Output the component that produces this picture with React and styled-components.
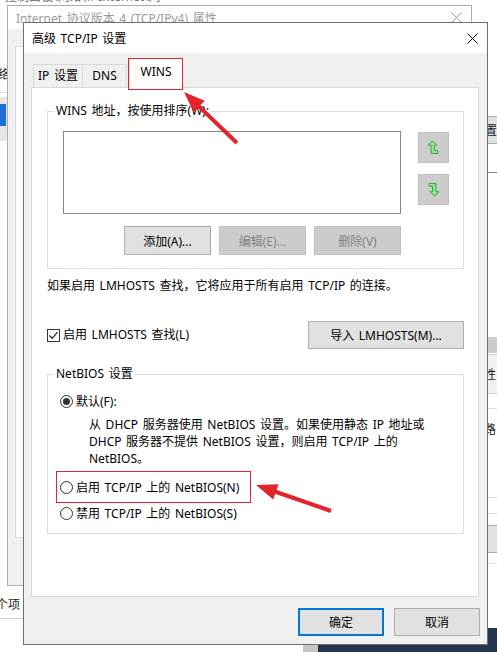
import styled, { createGlobalStyle } from 'styled-components';

const GlobalStyle = createGlobalStyle`
  html, body {
    margin: 0;
    padding: 0;
    background: #fff;
  }
  body {
    font-family: "Noto Sans", "Noto Sans CJK SC", "Microsoft YaHei", sans-serif;
    font-size: 12px;
    word-spacing: 1.5px;
    color: #000;
  }
  * {
    box-sizing: border-box;
  }
`;

const Desktop = styled.div`
  position: relative;
  width: 497px;
  height: 652px;
  overflow: hidden;
  background: #fff;
`;

/* ---------- background fragments (other windows behind the dialog) ---------- */

const Crumb = styled.div`
  position: absolute;
  left: 5px;
  top: -11px;
  line-height: 16px;
  color: #6d6d6d;
  white-space: nowrap;
`;

const Fragment = styled.div`
  position: absolute;
  left: ${(p) => p.$x}px;
  top: ${(p) => p.$y}px;
  width: ${(p) => p.$w}px;
  height: ${(p) => p.$h}px;
  background: ${(p) => p.$bg || 'transparent'};
  border: ${(p) => p.$border || 'none'};
  color: #1a1a1a;
  line-height: ${(p) => p.$h}px;
  white-space: nowrap;
  overflow: hidden;
`;

const BackWindow = styled.div`
  position: absolute;
  left: 7px;
  top: 5px;
  width: 465px;
  height: 581px;
  border: 1px solid #adadad;
  background: #f0f0f0;
  display: flex;
  flex-direction: column;
`;

const BackTitle = styled.div`
  height: 23px;
  background: #fff;
  display: flex;
  align-items: center;
  justify-content: space-between;
  padding: 0 9px 0 8px;
  color: #9a9a9a;
`;

const BackPanel = styled.div`
  margin: 17px 0 0 7px;
  height: 492px;
  background: #fff;
  border: 1px solid #d9d9d9;
`;

/* ---------- main dialog ---------- */

const Dialog = styled.div`
  position: absolute;
  left: 23px;
  top: 22px;
  width: 465px;
  height: 623px;
  border: 1px solid #6f6f6f;
  background: #f0f0f0;
  display: flex;
  flex-direction: column;
  z-index: 2;
`;

const TitleBar = styled.div`
  height: 30px;
  flex: none;
  background: #fff;
  display: flex;
  align-items: center;
  justify-content: space-between;
  padding: 0 9px 0 8px;
`;

const TabRow = styled.div`
  display: flex;
  align-items: flex-end;
  padding: 5px 0 0 9px;
  margin-bottom: -1px;
  position: relative;
  z-index: 1;
`;

const Tab = styled.div`
  position: relative;
  width: ${(p) => p.$w}px;
  height: ${(p) => (p.$active ? 30 : 24)}px;
  margin-left: ${(p) => p.$ml || 0}px;
  border: 1px solid #d9d9d9;
  border-bottom: ${(p) => (p.$active ? 'none' : '1px solid #d9d9d9')};
  background: ${(p) => (p.$active ? '#fff' : '#f0f0f0')};
  display: flex;
  justify-content: center;
  align-items: ${(p) => (p.$active ? 'flex-start' : 'center')};
  padding-top: ${(p) => (p.$active ? 5 : 0)}px;
  line-height: 16px;

  ${(p) =>
    p.$marked &&
    `
    &::after {
      content: '';
      position: absolute;
      left: -2px;
      right: -1px;
      top: -1px;
      bottom: -2px;
      border: 1px solid #e3242b;
    }
  `}
`;

const Panel = styled.div`
  margin: 0 8px 0 7px;
  height: 510px;
  flex: none;
  background: #fff;
  border: 1px solid #d9d9d9;
  padding: 0 14px 0 15px;
  display: flex;
  flex-direction: column;
`;

const Group = styled.div`
  margin-top: ${(p) => p.$mt}px;
  border: 1px solid #dcdcdc;
  padding: 0 14px ${(p) => p.$pb}px ${(p) => p.$pl}px;
`;

const Legend = styled.div`
  width: fit-content;
  margin: -9px 0 0 ${(p) => 6 - p.$pl}px;
  padding: 0 2px;
  background: #fff;
  line-height: 16px;
`;

const WinsBody = styled.div`
  display: flex;
  gap: 17px;
  margin-top: 12px;
`;

const ListColumn = styled.div`
  width: 338px;
  display: flex;
  flex-direction: column;
`;

const ListBox = styled.div`
  height: 83px;
  border: 1px solid #828790;
  background: #fff;
`;

const ArrowColumn = styled.div`
  display: flex;
  flex-direction: column;
  gap: 11px;
  padding-top: 1px;
`;

const ArrowButton = styled.div`
  width: 31px;
  height: 31px;
  background: #cccccc;
  border: 1px solid #bfbfbf;
  display: flex;
  align-items: center;
  justify-content: center;
`;

const ButtonRow = styled.div`
  display: flex;
  justify-content: flex-end;
  gap: 8px;
  margin-top: 12px;
`;

const Button = styled.div`
  width: ${(p) => p.$w || 87}px;
  height: ${(p) => p.$h || 29}px;
  display: flex;
  align-items: center;
  justify-content: center;
  background: ${(p) => (p.$disabled ? '#cccccc' : '#e1e1e1')};
  border: ${(p) =>
    p.$primary
      ? '2px solid #0078d7'
      : p.$disabled
        ? '1px solid #bfbfbf'
        : '1px solid #adadad'};
  color: ${(p) => (p.$disabled ? '#838383' : '#000')};
  white-space: nowrap;
`;

const Hint = styled.div`
  margin-top: 9px;
  line-height: 16px;
`;

const LmRow = styled.div`
  margin-top: 27px;
  height: 28px;
  display: flex;
  align-items: center;
  justify-content: space-between;
`;

const CheckLabel = styled.div`
  display: flex;
  align-items: center;
  gap: 3px;
  line-height: 16px;
`;

const CheckBox = styled.div`
  width: 13px;
  height: 13px;
  border: 1px solid #333;
  background: #fff;
  display: flex;
  align-items: center;
  justify-content: center;
`;

const RadioRow = styled.div`
  display: flex;
  align-items: center;
  gap: 3px;
  line-height: 17px;
  margin-top: ${(p) => p.$mt || 0}px;
`;

const Radio = styled.div`
  width: 13px;
  height: 13px;
  border-radius: 50%;
  border: 1px solid #333;
  background: #fff;
  display: flex;
  align-items: center;
  justify-content: center;

  &::after {
    content: '';
    display: ${(p) => (p.$checked ? 'block' : 'none')};
    width: 7px;
    height: 7px;
    border-radius: 50%;
    background: #333;
  }
`;

const Description = styled.div`
  margin: 6px 0 0 29px;
  line-height: 17px;
`;

const Marked = styled.div`
  width: fit-content;
  margin: 4px 0 0 -4px;
  height: 32px;
  padding: 0 11px 0 3px;
  border: 1px solid #e3242b;
  display: flex;
  align-items: center;
`;

const Footer = styled.div`
  display: flex;
  justify-content: flex-end;
  gap: 10px;
  padding: 11px 7px 0 0;
`;

const Overlay = styled.svg`
  position: absolute;
  left: 0;
  top: 0;
  width: 497px;
  height: 652px;
  pointer-events: none;
  z-index: 5;
`;

/* ---------- icons ---------- */

const CloseIcon = ({ color = '#000' }) => (
  <svg width="11" height="11" viewBox="0 0 11 11">
    <path d="M0.5 0.5 L10.5 10.5 M10.5 0.5 L0.5 10.5" stroke={color} strokeWidth="1" />
  </svg>
);

const MoveIcon = ({ down }) => (
  <svg
    width="11"
    height="15"
    viewBox="0 0 11 15"
    style={down ? { transform: 'rotate(180deg)' } : undefined}
  >
    <polygon
      points="4.5,0.8 9,5.3 6.5,5.3 6.5,10.5 10,10.5 10,13.5 3,13.5 3,5.3 0,5.3"
      fill="#8fe28f"
      stroke="#3aa845"
      strokeWidth="1"
    />
  </svg>
);

const CheckMark = () => (
  <svg width="11" height="11" viewBox="0 0 11 11">
    <path d="M1.5 5.5 L4.2 8.3 L9.5 2.2" fill="none" stroke="#1a1a1a" strokeWidth="1.2" />
  </svg>
);

const arrowHead = (tip, tail, len = 21, half = 8) => {
  const dx = tip[0] - tail[0];
  const dy = tip[1] - tail[1];
  const d = Math.hypot(dx, dy);
  const ux = dx / d;
  const uy = dy / d;
  const bx = tip[0] - ux * len;
  const by = tip[1] - uy * len;
  return `${tip[0]},${tip[1]} ${bx - uy * half},${by + ux * half} ${bx + uy * half},${by - ux * half}`;
};

const RedArrow = ({ tip, tail }) => {
  const dx = tip[0] - tail[0];
  const dy = tip[1] - tail[1];
  const d = Math.hypot(dx, dy);
  const end = [tip[0] - (dx / d) * 16, tip[1] - (dy / d) * 16];
  return (
    <g>
      <line x1={tail[0]} y1={tail[1]} x2={end[0]} y2={end[1]} stroke="#e3242b" strokeWidth="4" />
      <polygon points={arrowHead(tip, tail)} fill="#e3242b" />
    </g>
  );
};

const App = () => {
  return (
    <Desktop>
      <GlobalStyle />

      <Crumb>控制面板\网络和 Internet\网</Crumb>
      <Fragment $x={-14} $y={67} $w={21} $h={16}>网络</Fragment>
      <Fragment $x={0} $y={92} $w={7} $h={1} $bg="#d6d6d6" />
      <Fragment $x={0} $y={97} $w={7} $h={44} $bg="#e6e6e6" />
      <Fragment $x={0} $y={104} $w={6} $h={22} $bg="#1f6fd6" />
      <Fragment $x={-4} $y={597} $w={28} $h={16}>个项</Fragment>
      <Fragment $x={0} $y={618} $w={23} $h={1} $bg="#d0d0d0" />

      <Fragment $x={487} $y={116} $w={14} $h={28} $bg="#e1e1e1" $border="1px solid #adadad">
        <span style={{ marginLeft: -3 }}>置</span>
      </Fragment>
      <Fragment $x={487} $y={172} $w={10} $h={1} $bg="#8a8a8a" />
      <Fragment $x={487} $y={337} $w={10} $h={16} $bg="#cccccc" />
      <Fragment $x={487} $y={354} $w={14} $h={40} $bg="#f0f0f0" $border="1px solid #d6d6d6">
        <span style={{ marginLeft: -4 }}>性</span>
      </Fragment>
      <Fragment $x={487} $y={408} $w={10} $h={1} $bg="#dcdcdc" />
      <Fragment $x={487} $y={422} $w={10} $h={16}>
        <span style={{ marginLeft: -3 }}>路</span>
      </Fragment>
      <Fragment $x={487} $y={497} $w={10} $h={1} $bg="#dcdcdc" />
      <Fragment $x={487} $y={513} $w={10} $h={1} $bg="#dcdcdc" />
      <Fragment $x={487} $y={525} $w={12} $h={28} $bg="#e1e1e1" $border="1px solid #adadad" />
      <Fragment $x={487} $y={563} $w={10} $h={1} $bg="#dcdcdc" />
      <Fragment $x={318} $y={628} $w={179} $h={24} $bg="#24344c" />
      <Fragment $x={303} $y={644} $w={15} $h={8} $bg="#c6c6c6" />

      <BackWindow>
        <BackTitle>
          <span>Internet 协议版本 4 (TCP/IPv4) 属性</span>
          <CloseIcon color="#9a9a9a" />
        </BackTitle>
        <BackPanel />
      </BackWindow>

      <Dialog>
        <TitleBar>
          <span>高级 TCP/IP 设置</span>
          <CloseIcon />
        </TitleBar>

        <TabRow>
          <Tab $w={50}>IP 设置</Tab>
          <Tab $w={45} $ml={-1}>DNS</Tab>
          <Tab $w={54} $ml={2} $active $marked>WINS</Tab>
        </TabRow>

        <Panel>
          <Group $mt={23} $pl={15} $pb={13}>
            <Legend $pl={15}>WINS 地址，按使用排序(W):</Legend>
            <WinsBody>
              <ListColumn>
                <ListBox />
                <ButtonRow>
                  <Button>添加(A)...</Button>
                  <Button $disabled>编辑(E)...</Button>
                  <Button $disabled>删除(V)</Button>
                </ButtonRow>
              </ListColumn>
              <ArrowColumn>
                <ArrowButton>
                  <MoveIcon />
                </ArrowButton>
                <ArrowButton>
                  <MoveIcon down />
                </ArrowButton>
              </ArrowColumn>
            </WinsBody>
          </Group>

          <Hint>如果启用 LMHOSTS 查找，它将应用于所有启用 TCP/IP 的连接。</Hint>

          <LmRow>
            <CheckLabel>
              <CheckBox>
                <CheckMark />
              </CheckBox>
              <span>启用 LMHOSTS 查找(L)</span>
            </CheckLabel>
            <Button $w={156} $h={28}>导入 LMHOSTS(M)...</Button>
          </LmRow>

          <Group $mt={25} $pl={12} $pb={11}>
            <Legend $pl={12}>NetBIOS 设置</Legend>
            <RadioRow $mt={11}>
              <Radio $checked />
              <span>默认(F):</span>
            </RadioRow>
            <Description>
              从 DHCP 服务器使用 NetBIOS 设置。如果使用静态 IP 地址或
              <br />
              DHCP 服务器不提供 NetBIOS 设置，则启用 TCP/IP 上的
              <br />
              NetBIOS。
            </Description>
            <Marked>
              <RadioRow>
                <Radio />
                <span>启用 TCP/IP 上的 NetBIOS(N)</span>
              </RadioRow>
            </Marked>
            <RadioRow $mt={2}>
              <Radio />
              <span>禁用 TCP/IP 上的 NetBIOS(S)</span>
            </RadioRow>
          </Group>
        </Panel>

        <Footer>
          <Button $w={86} $h={28} $primary>确定</Button>
          <Button $w={86} $h={28}>取消</Button>
        </Footer>
      </Dialog>

      <Overlay viewBox="0 0 497 652">
        <RedArrow tip={[184, 92]} tail={[237, 143]} />
        <RedArrow tip={[256, 485]} tail={[331, 511]} />
      </Overlay>
    </Desktop>
  );
};

export default App;
